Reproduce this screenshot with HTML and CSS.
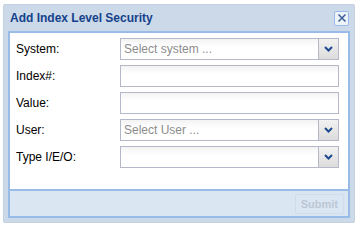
FILE: index.html
```html
<!DOCTYPE html>
<html lang="en">
<head>
    <meta charset="UTF-8">
    <title>Add Index Level Security</title>
    <link rel="stylesheet" href="styles.css">
</head>
<body>
    <div class="window">
        <div class="win-header">
            <span class="win-title">Add Index Level Security</span>
            <span class="win-close">
                <svg width="10" height="10" viewBox="0 0 10 10"><path d="M1.5 1.5 L8.5 8.5 M8.5 1.5 L1.5 8.5" stroke="#3a5f99" stroke-width="1.5" fill="none"/></svg>
            </span>
        </div>
        <div class="win-inner">
            <div class="win-body">
                <div class="row">
                    <label>System:</label>
                    <div class="field combo">
                        <span class="placeholder">Select system ...</span>
                        <span class="trigger"><svg width="9" height="6" viewBox="0 0 9 6"><path d="M1 1 L4.5 4.5 L8 1" stroke="#1d4b8e" stroke-width="2" fill="none"/></svg></span>
                    </div>
                </div>
                <div class="row">
                    <label>Index#:</label>
                    <div class="field"></div>
                </div>
                <div class="row">
                    <label>Value:</label>
                    <div class="field"></div>
                </div>
                <div class="row">
                    <label>User:</label>
                    <div class="field combo">
                        <span class="placeholder">Select User ...</span>
                        <span class="trigger"><svg width="9" height="6" viewBox="0 0 9 6"><path d="M1 1 L4.5 4.5 L8 1" stroke="#1d4b8e" stroke-width="2" fill="none"/></svg></span>
                    </div>
                </div>
                <div class="row">
                    <label>Type I/E/O:</label>
                    <div class="field combo">
                        <span class="placeholder"></span>
                        <span class="trigger"><svg width="9" height="6" viewBox="0 0 9 6"><path d="M1 1 L4.5 4.5 L8 1" stroke="#1d4b8e" stroke-width="2" fill="none"/></svg></span>
                    </div>
                </div>
            </div>
            <div class="win-footer">
                <span class="btn-submit">Submit</span>
            </div>
        </div>
    </div>
</body>
</html>
```

FILE: styles.css
```css
body {
    margin: 0;
    padding: 4px 0 0 3px;
    background: #ffffff;
    font-family: "Liberation Sans", Arial, sans-serif;
    font-size: 12px;
}
.window {
    width: 342px;
    background: #ccd9e8;
    border: 1px solid #c4d0de;
    border-radius: 2px;
    padding: 0 4px 4px 4px;
}
.win-header {
    height: 26px;
    display: flex;
    align-items: center;
    justify-content: space-between;
}
.win-title {
    color: #15428b;
    font-weight: bold;
    font-size: 12px;
    padding-left: 2px;
}
.win-close {
    width: 13px;
    height: 13px;
    border: 1px solid #99bbe8;
    background: #eef3fa;
    border-radius: 2px;
    display: flex;
    align-items: center;
    justify-content: center;
    margin-right: 1px;
}
.win-inner {
    border: 2px solid #99bbe8;
    background: #dbe6f3;
}
.win-body {
    background: #ffffff;
    border-bottom: 2px solid #99bbe8;
    padding: 5px 6px 21px 6px;
    display: flex;
    flex-direction: column;
    gap: 5px;
}
.row {
    display: flex;
    align-items: center;
}
.row label {
    width: 104px;
    color: #000000;
}
.field {
    width: 217px;
    height: 20px;
    border: 1px solid #b5b8c8;
    background: linear-gradient(#f3f3f3, #ffffff 40%);
    display: flex;
    align-items: center;
    justify-content: space-between;
}
.placeholder {
    color: #8c8c8c;
    padding-left: 3px;
}
.trigger {
    width: 19px;
    height: 20px;
    border-left: 1px solid #b5b8c8;
    background: linear-gradient(#f2f2f2, #dcdcdc);
    display: flex;
    align-items: center;
    justify-content: center;
}
.win-footer {
    height: 25px;
    display: flex;
    align-items: center;
    justify-content: flex-end;
    padding-right: 4px;
}
.btn-submit {
    color: #bcc7d4;
    font-weight: bold;
    font-size: 11px;
    padding: 3px 5px;
    border: 1px solid #d0dceb;
    border-radius: 2px;
}
```
